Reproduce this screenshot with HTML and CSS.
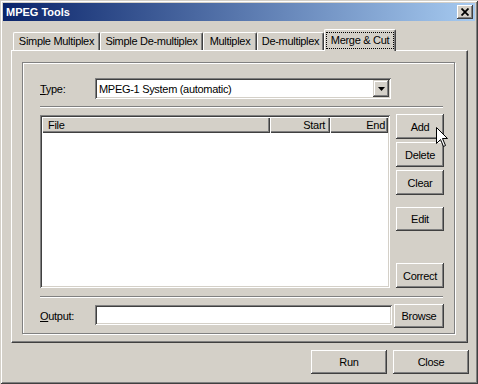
FILE: index.html
```html
<!DOCTYPE html>
<html>
<head>
<meta charset="utf-8">
<title>MPEG Tools</title>
<link rel="stylesheet" href="styles.css">
</head>
<body>
<div class="window">
  <div class="titlebar">
    <span class="title">MPEG Tools</span>
    <span class="close"><svg width="8" height="8" viewBox="0 0 8 8"><path d="M0.5 0.5 L7.5 7.5 M7.5 0.5 L0.5 7.5" stroke="#000" stroke-width="1.8" fill="none"/></svg></span>
  </div>
  <div class="client">
    <div class="tabs">
      <div class="tab t1">Simple Multiplex</div>
      <div class="tab t2">Simple De-multiplex</div>
      <div class="tab t3">Multiplex</div>
      <div class="tab t4">De-multiplex</div>
      <div class="tab t5 sel"><span class="focus">Merge &amp; Cut</span></div>
    </div>
    <div class="panel">
      <div class="frame">
        <div class="type-row">
          <span class="lbl"><u>T</u>ype:</span>
          <div class="combo">
            <span class="combo-text">MPEG-1 System (automatic)</span>
            <span class="drop"><svg width="7" height="4" viewBox="0 0 7 4"><path d="M0 0 H7 L3.5 4 Z" fill="#000"/></svg></span>
          </div>
        </div>
        <div class="sep"></div>
        <div class="list-row">
          <div class="list">
            <div class="header">
              <div class="hcell c-file">File</div>
              <div class="hcell c-start">Start</div>
              <div class="hcell c-end">End</div>
            </div>
          </div>
          <div class="side">
            <button class="btn b-add">Add</button>
            <button class="btn b-delete">Delete</button>
            <button class="btn b-clear">Clear</button>
            <button class="btn b-edit">Edit</button>
            <button class="btn b-correct">Correct</button>
          </div>
        </div>
        <div class="sep"></div>
        <div class="out-row">
          <span class="lbl out-lbl"><u>O</u>utput:</span>
          <div class="input"></div>
          <button class="btn browse">Browse</button>
        </div>
      </div>
    </div>
    <div class="footer">
      <button class="btn big">Run</button>
      <button class="btn big last">Close</button>
    </div>
  </div>
  <svg class="cursor" width="13" height="21" viewBox="0 0 13 21"><path d="M0.5 0.5 V16.5 L4.5 12.5 L7.5 19.5 L9.5 18.5 L6.5 11.5 H11.5 Z" fill="#fff" stroke="#000" stroke-width="1" stroke-linejoin="miter"/></svg>
</div>
</body>
</html>
```

FILE: styles.css
```css
* { box-sizing: border-box; }
html, body { margin: 0; padding: 0; }
body {
  width: 478px;
  height: 384px;
  overflow: hidden;
  background: #D4D0C8;
  font-family: "Liberation Sans", Arial, sans-serif;
  font-size: 11px;
  letter-spacing: -0.3px;
  color: #000;
}
.window {
  position: relative;
  width: 478px;
  height: 384px;
  padding: 3px;
  background: #D4D0C8;
  box-shadow: inset 1px 1px #D4D0C8, inset -1px -1px #404040, inset 2px 2px #fff, inset -2px -2px #808080;
  display: flex;
  flex-direction: column;
}
.titlebar {
  height: 18px;
  flex: none;
  background: linear-gradient(to right, #0A246A, #A6CAF0);
  display: flex;
  align-items: center;
  justify-content: space-between;
  padding: 0 2px 0 2px;
}
.title {
  color: #fff;
  font-weight: bold;
  font-size: 11px;
  letter-spacing: 0;
  padding-left: 1px;
}
.close {
  width: 16px;
  height: 14px;
  background: #D4D0C8;
  box-shadow: inset -1px -1px #404040, inset 1px 1px #fff, inset -2px -2px #808080;
  display: flex;
  align-items: center;
  justify-content: center;
  padding-bottom: 1px;
}
.close svg { display: block; }
.client {
  padding: 0 7px 0 8px;
  display: flex;
  flex-direction: column;
}
.tabs {
  margin-top: 8px;
  height: 21px;
  display: flex;
  align-items: flex-end;
  padding-left: 2px;
  position: relative;
  z-index: 2;
}
.tab {
  height: 18px;
  background: #D4D0C8;
  border-top: 1px solid #fff;
  border-left: 1px solid #fff;
  border-right: 1px solid #404040;
  border-radius: 2px 2px 0 0;
  box-shadow: inset -1px 0 #808080;
  display: flex;
  align-items: center;
  justify-content: center;
  white-space: nowrap;
  padding-bottom: 1px;
}
.t1 { width: 87px; }
.t2 { width: 103px; }
.t3 { width: 54px; }
.t4 { width: 67px; }
.t5 { width: 72px; }
.tab.sel {
  height: 22px;
  margin-bottom: -1px;
  align-items: flex-start;
  padding: 2px 1px 0 1px;
}
.focus {
  display: block;
  width: 68px;
  height: 17px;
  border: 1px dotted #000;
  text-align: center;
  line-height: 14px;
}
.panel {
  height: 293px;
  background: #D4D0C8;
  border-top: 1px solid #fff;
  border-left: 1px solid #fff;
  border-right: 1px solid #404040;
  border-bottom: 1px solid #404040;
  box-shadow: inset -1px -1px #808080;
  padding: 11px 12px 10px 10px;
  display: flex;
  flex-direction: column;
}
.frame {
  flex: 1;
  border: 1px solid #808080;
  box-shadow: inset 1px 1px #fff, 1px 1px #fff;
  padding: 15px 10px 5px 17px;
  display: flex;
  flex-direction: column;
}
.type-row {
  display: flex;
  align-items: center;
  height: 21px;
}
.lbl {
  width: 55px;
  flex: none;
}
.out-lbl {
  align-self: center;
  padding-bottom: 1px;
}
.combo {
  width: 296px;
  height: 21px;
  background: #fff;
  box-shadow: inset 1px 1px #808080, inset -1px -1px #fff, inset 2px 2px #404040, inset -2px -2px #D4D0C8;
  display: flex;
  align-items: center;
  padding: 2px;
}
.combo-text {
  flex: 1;
  padding-left: 2px;
}
.drop {
  width: 16px;
  height: 17px;
  background: #D4D0C8;
  box-shadow: inset -1px -1px #404040, inset 1px 1px #D4D0C8, inset -2px -2px #808080, inset 2px 2px #fff;
  display: flex;
  align-items: center;
  justify-content: center;
}
.drop svg { display: block; }
.sep {
  height: 2px;
  border-top: 1px solid #808080;
  border-bottom: 1px solid #fff;
  margin-top: 7px;
  margin-right: 1px;
}
.list-row {
  display: flex;
  margin-top: 6px;
  height: 175px;
}
.list {
  width: 350px;
  height: 173px;
  margin-top: 1px;
  background: #fff;
  box-shadow: inset 1px 1px #808080, inset -1px -1px #fff, inset 2px 2px #404040, inset -2px -2px #D4D0C8;
  padding: 2px;
  display: flex;
  flex-direction: column;
}
.header {
  display: flex;
  height: 16px;
}
.hcell {
  height: 16px;
  background: #D4D0C8;
  box-shadow: inset 1px 1px #fff, inset -1px -1px #404040, inset -2px -2px #808080;
  display: flex;
  align-items: center;
  padding: 0 6px 1px 6px;
}
.c-file { width: 228px; }
.c-start { width: 60px; justify-content: flex-end; padding-right: 5px; }
.c-end { flex: 1; justify-content: flex-end; padding-right: 3px; }
.side {
  margin-left: 6px;
  width: 48px;
  display: flex;
  flex-direction: column;
}
.btn {
  width: 48px;
  height: 25px;
  background: #D4D0C8;
  border: none;
  padding: 0;
  margin: 0;
  font-family: "Liberation Sans", Arial, sans-serif;
  font-size: 11px;
  letter-spacing: -0.3px;
  color: #000;
  box-shadow: inset -1px -1px #404040, inset 1px 1px #fff, inset -2px -2px #808080, inset 2px 2px #D4D0C8;
  text-align: center;
  flex: none;
}
.b-delete { margin-top: 3px; }
.b-clear { margin-top: 3px; }
.b-edit { margin-top: 12px; height: 24px; }
.b-correct { margin-top: 32px; }
.out-row {
  display: flex;
  align-items: flex-start;
  margin-top: 6px;
  height: 24px;
}
.input {
  width: 297px;
  height: 20px;
  margin-top: 1px;
  background: #fff;
  box-shadow: inset 1px 1px #808080, inset -1px -1px #fff, inset 2px 2px #404040, inset -2px -2px #D4D0C8;
}
.browse {
  margin-left: 2px;
  width: 50px;
  height: 24px;
}
.footer {
  display: flex;
  justify-content: flex-end;
  gap: 6px;
  margin-top: 7px;
}
.big {
  width: 76px;
  height: 24px;
}
.big.last { margin-right: -1px; }
.cursor {
  position: absolute;
  left: 436px;
  top: 127px;
}
```
